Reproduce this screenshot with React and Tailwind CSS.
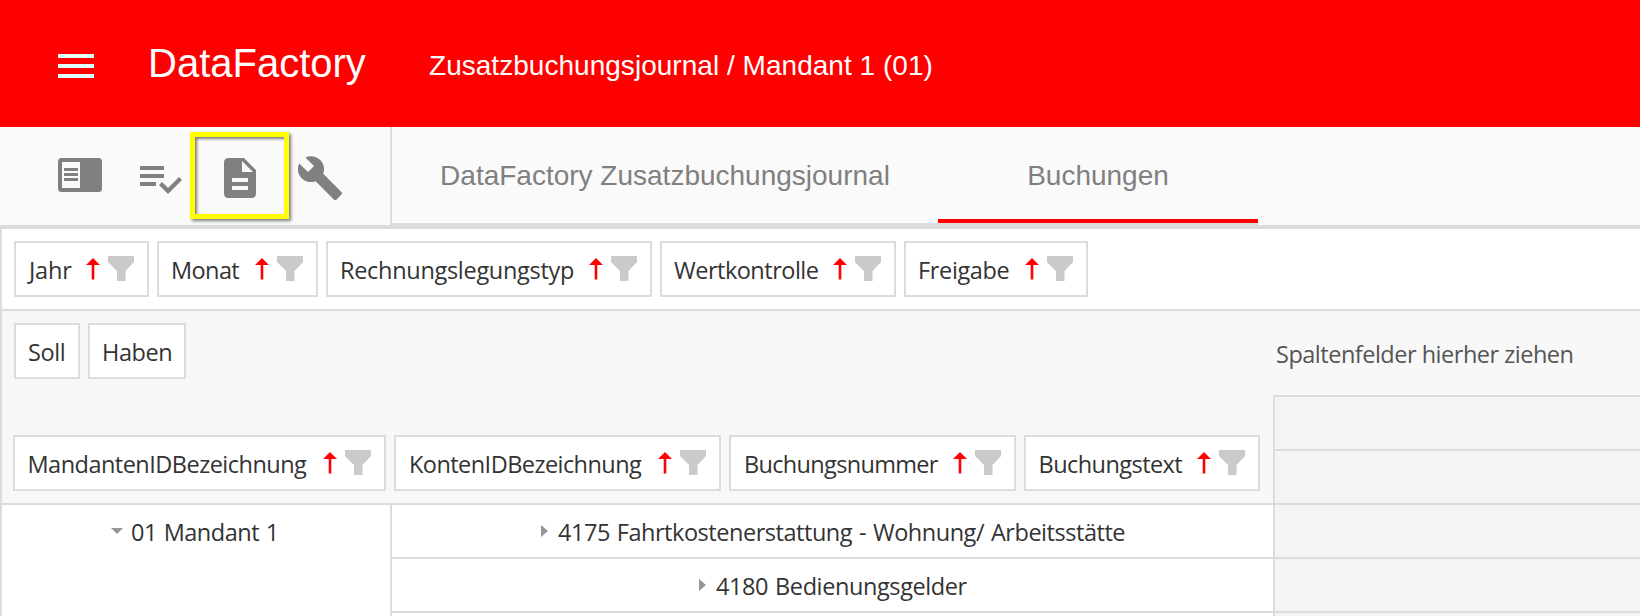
const FilterIcon = () => (
  <svg width="26" height="25" viewBox="0 0 26 25" className="shrink-0 fill-[#cacaca]">
    <path d="M0 0h26v6l-8.500 9v10h-8.500v-10l-9-9z" />
  </svg>
);

const SortIcon = () => (
  <svg width="14" height="22" viewBox="0 0 14 22" className="shrink-0 fill-[#ff0000]">
    <path d="M7 0l7 7H8.300v14.500H5.700V7H0z" />
  </svg>
);

function Chip({ label, className, text = "", sortable = true }) {
  return (
    <div className={`flex h-14 shrink-0 justify-between border-2 border-[#dcdcdc] bg-white pl-3 pr-[13px] ${className}`}>
      <span className={`whitespace-nowrap leading-8 pt-[11px] ${text}`}>{label}</span>
      {sortable && (
        <span className="flex gap-2 pt-[13px]">
          <span className="pt-[2px]"><SortIcon /></span>
          <FilterIcon />
        </span>
      )}
    </div>
  );
}

function Tool({ path, className = "" }) {
  return (
    <svg viewBox="0 0 24 24" className={`size-12 shrink-0 fill-[#808080] ${className}`}>
      <path d={path} />
    </svg>
  );
}

const LIST = "M14 10H2v2h12v-2zm0-4H2v2h12V6zM2 16h8v-2H2v2zm19.5-4.5L23 13l-6.990 7-4.510-4.500L13 14l3.010 3 5.490-5.500z";
const DOCUMENT = "M14 2H6c-1.100 0-1.990.9-1.990 2L4 20c0 1.100.89 2 1.990 2H18c1.100 0 2-.9 2-2V8l-6-6zm2 16H8v-2h8v2zm0-4H8v-2h8v2zm-3-5V3.500L18.500 9H13z";
const WRENCH = "M22.700 19l-9.100-9.100c.9-2.300.4-5-1.500-6.900-2-2-5-2.400-7.400-1.300L9 6 6 9 1.600 4.700C.4 7.100.9 10.100 2.900 12.100c1.900 1.900 4.600 2.400 6.900 1.500l9.100 9.100c.4.4 1 .4 1.400 0l2.300-2.300c.5-.4.5-1.100.1-1.400z";

function Header() {
  return (
    <header className="flex h-[127px] bg-[#ff0000] pl-[58px] text-white">
      <div className="mt-[54px] flex w-9 flex-col gap-[6px]">
        <div className="h-1 bg-[#e0ffff]" />
        <div className="h-1 bg-[#e0ffff]" />
        <div className="h-1 bg-[#e0ffff]" />
      </div>
      <h1 className="ml-[54px] mt-[39px] w-[281px] text-[40px] leading-[48px]">DataFactory</h1>
      <div className="mt-[50px] whitespace-nowrap text-[28px] leading-8 tracking-[0.03px]">Zusatzbuchungsjournal / Mandant 1 (01)</div>
    </header>
  );
}

function Toolbar() {
  return (
    <div className="flex h-[98px] bg-[#fafafa]">
      <div className="relative flex w-[392px] border-r-2 border-[#dcdcdc] pl-14 pt-[27px]">
        <svg viewBox="0 0 48 48" className="size-12 shrink-0">
          <rect x="2" y="4" width="44" height="34" rx="3.500" fill="#808080" />
          <path fill="#fafafa" d="M6 8h18v26H6z" />
          <path fill="#808080" d="M8 14h14v3H8zm0 5h14v3H8zm0 5h14v3H8z" />
        </svg>
        <Tool path={LIST} className="ml-8" />
        <Tool path={DOCUMENT} className="ml-8" />
        <Tool path={WRENCH} className="ml-8" />
        <div className="absolute left-[190px] top-[5px] h-[87px] w-[99px] border-[5px] border-[#ffff00] shadow-[2px_2px_3px_rgba(0,0,0,0.5),inset_2px_2px_3px_rgba(0,0,0,0.5)]" />
      </div>
      <div className="flex border-b-2 border-[#dcdcdc] text-[28px] leading-8 text-[#808080]">
        <div className="w-[546px] pt-[33px] text-center">DataFactory Zusatzbuchungsjournal</div>
        <div className="w-80 border-b-4 border-[#ff0000] pt-[33px] text-center">Buchungen</div>
      </div>
    </div>
  );
}

function Row({ label, className, text }) {
  return (
    <div className={`flex h-[54px] border-b-2 border-[#dcdcdc] bg-white ${className}`}>
      <svg width="7" height="12" viewBox="0 0 7 12" className="mt-5 shrink-0 fill-[#959595]">
        <path d="M0 0l7 6-7 6z" />
      </svg>
      <span className={`ml-[10px] mt-[11px] whitespace-nowrap leading-8 [word-spacing:1.2px] ${text}`}>{label}</span>
    </div>
  );
}

export default function App() {
  return (
    <div className="h-[616px] w-[1640px] overflow-hidden bg-white font-['Liberation_Sans',Arial,sans-serif]">
      <Header />
      <Toolbar />
      <main className="flex h-[391px] flex-col border-l-2 border-t-4 border-[#dcdcdc] font-['Open_Sans','Noto_Sans',sans-serif] text-[23.5px] tracking-[-0.6px] text-[#333333]">
        <div className="flex h-[82px] shrink-0 gap-2 border-b-2 border-[#dcdcdc] pl-3 pt-3">
          <Chip label="Jahr" className="w-[135px]" text="tracking-[-0.2px] pl-[1px]" />
          <Chip label="Monat" className="w-[161px]" />
          <Chip label="Rechnungslegungstyp" className="w-[326px]" text="tracking-[-0.3px]" />
          <Chip label="Wertkontrolle" className="w-[236px]" text="tracking-[-0.5px]" />
          <Chip label="Freigabe" className="w-[184px]" text="tracking-[-0.35px]" />
        </div>
        <div className="flex">
          <div className="flex w-[1271px] shrink-0 flex-col">
            <div className="flex h-[194px] flex-col justify-between border-b-2 border-[#dcdcdc] bg-[#f8f8f8] py-3">
              <div className="flex gap-2 pl-3">
                <Chip label="Soll" className="w-[66px]" text="tracking-[-0.4px]" sortable={false} />
                <Chip label="Haben" className="w-[98px]" text="tracking-[-0.45px]" sortable={false} />
              </div>
              <div className="flex gap-2 pl-[11px]">
                <Chip label="MandantenIDBezeichnung" className="w-[373px]" text="pl-[0.5px] tracking-[-0.52px]" />
                <Chip label="KontenIDBezeichnung" className="w-[327px]" text="pl-[1px] tracking-[-0.55px]" />
                <Chip label="Buchungsnummer" className="w-[287px]" text="pl-[1px] tracking-[-0.67px]" />
                <Chip label="Buchungstext" className="w-[236px]" text="pl-[0.5px] tracking-[-0.55px]" />
              </div>
            </div>
            <div className="flex h-28">
              <div className="flex w-[390px] border-r-2 border-[#dcdcdc] pl-[109px]">
                <svg width="12" height="6" viewBox="0 0 12 6" className="mt-[23px] shrink-0 fill-[#959595]">
                  <path d="M0 0h12l-6 6z" />
                </svg>
                <span className="ml-[8px] mt-[11px] whitespace-nowrap leading-8 tracking-[-0.5px] [word-spacing:1.2px]">01 Mandant 1</span>
              </div>
              <div className="flex-1">
                <Row label="4175 Fahrtkostenerstattung - Wohnung/ Arbeitsstätte" className="pl-[149px]" text="tracking-[-0.46px]" />
                <Row label="4180 Bedienungsgelder" className="pl-[307px]" text="tracking-[-0.4px]" />
              </div>
            </div>
          </div>
          <div className="flex-1">
            <div className="h-[84px] bg-[#f8f8f8] pl-[3px] pt-[27px] leading-8 text-[#555555]">
              <span className="whitespace-nowrap tracking-[-0.49px]">Spaltenfelder hierher ziehen</span>
            </div>
            <div className="border-l-2 border-t-2 border-[#dcdcdc] bg-[#f4f4f4]">
              <div className="h-[54px] border-b-2 border-[#dcdcdc]" />
              <div className="h-[54px] border-b-2 border-[#dcdcdc]" />
              <div className="h-[54px] border-b-2 border-[#dcdcdc]" />
              <div className="h-[54px] border-b-2 border-[#dcdcdc]" />
              <div className="h-4" />
            </div>
          </div>
        </div>
      </main>
    </div>
  );
}
